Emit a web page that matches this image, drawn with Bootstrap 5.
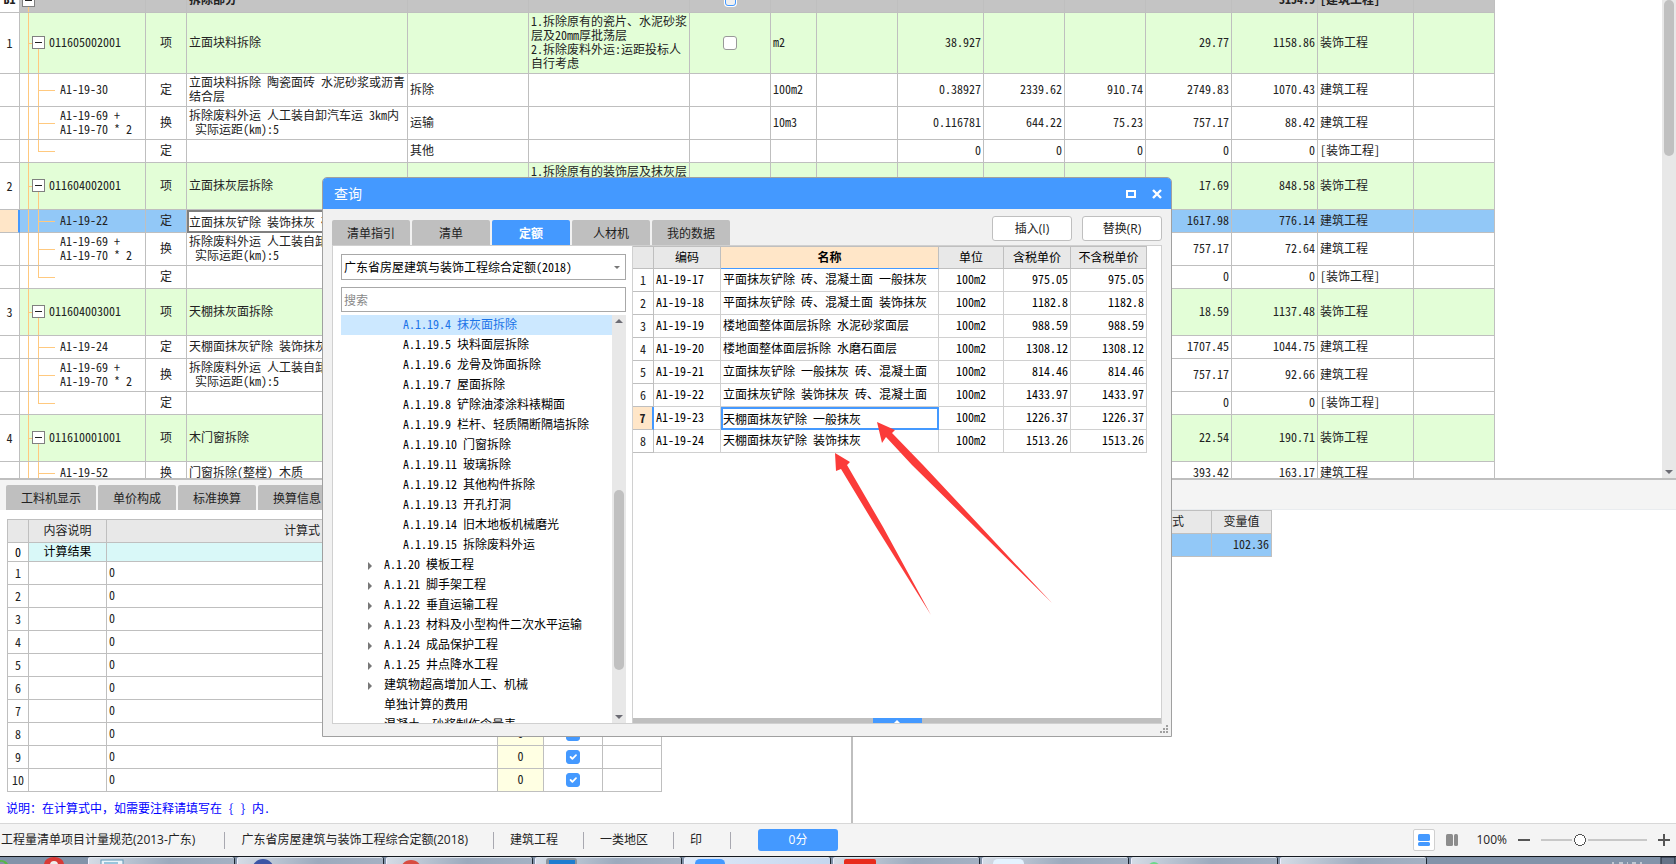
<!DOCTYPE html>
<html lang="zh-CN">
<head>
<meta charset="utf-8">
<meta name="viewport" content="width=device-width, initial-scale=1">
<title>工程计价 - 查询</title>
<link rel="stylesheet" href="https://cdn.jsdelivr.net/npm/bootstrap@5.3.0/dist/css/bootstrap.min.css">
<style>
:root{--line:#bfbfbf;--blue:#4499ff;--panel:#f4f4f4;--head:#e8e8e8;--sel:#92c8f7;--green:#e3fed7;--tree:#ffc97f;--peach:#ffe6c8}
body{font-family:"Noto Sans Mono CJK SC","Noto Sans CJK SC",sans-serif;font-size:12px;line-height:14px;color:#222;background:#fff}
.ui{font-family:"Open Sans","Noto Sans CJK SC",sans-serif}
.app{height:100vh;min-width:1200px}
.upper{flex:479 1 0;min-height:0}
.lower{flex:343 1 0;min-height:0}
.sheet{overflow:hidden;flex:1 1 0}
.grid{table-layout:fixed;border-collapse:separate;border-spacing:0}
.grid th,.grid td{border:0 solid var(--line);border-right-width:1px;border-bottom-width:1px;padding:0 2px 2px;height:23px;font-weight:400;overflow:hidden;white-space:nowrap;vertical-align:middle}
.grid th{background:var(--head);text-align:center}
.grid .no{text-align:center;padding:0}
.c{text-align:center}
.r{text-align:right}
.main-sheet{margin-top:-10px;width:1495px}
.main-sheet tr.h61 td{height:61px}
.main-sheet tr.h33 td{height:33px}
.main-sheet tr.h47 td{height:47px}
.main-sheet td{white-space:pre-line;line-height:14px}
.main-sheet td.pre{white-space:pre}
.part td{background-color:#c4c4c4;font-weight:700}
.part td.no,.item td.no{background:#fff}
.grid .part td{padding-bottom:4px}
.item td{background-color:var(--green)}
.pick td{background-color:var(--sel)}
.pick td.no{background:var(--peach);border-right:2px solid var(--blue)}
.grid .pick td.name{background:#fff;border:2px solid #808080;padding:0}
.main-sheet .code{background-repeat:no-repeat;background-origin:border-box;position:relative}
.part .code{background-image:linear-gradient(var(--tree),var(--tree));background-size:1px 50%;background-position:8px 100%}
.item .code{padding-left:29px;background-image:linear-gradient(var(--tree),var(--tree)),linear-gradient(var(--tree),var(--tree)),linear-gradient(var(--tree),var(--tree));background-size:1px 100%,4px 1px,1px 50%;background-position:8px 0,8px 50%,18px 100%}
.leaf .code{padding-left:40px;background-image:linear-gradient(var(--tree),var(--tree)),linear-gradient(var(--tree),var(--tree)),linear-gradient(var(--tree),var(--tree));background-size:1px 100%,17px 1px,1px 100%;background-position:8px 0,18px 50%,18px 0}
.leaf.end .code{background-size:1px 100%,17px 1px,1px 50%}
.toggle{position:absolute;left:12px;top:50%;margin-top:-7px;width:13px;height:13px;padding:0;border:1px solid #808080;background:#fff}
.toggle::after{content:"";display:block;height:1px;margin:0 2px;background:#222}
.part .toggle{left:2px}
.form-check-input{width:14px;height:14px;margin:0;border:1px solid #999;border-radius:2px;float:none;display:inline-block;vertical-align:middle}
.form-check-input:checked{background-color:var(--blue);border-color:var(--blue)}
.part .form-check-input{border-color:var(--blue);box-shadow:0 0 0 1px #fff;background:#f0f0f0;width:11px;height:12px}
.vbar{width:14px;background:#e8e8e8}
.thumb{width:10px;margin:0 auto;background:#c0c0c0;border-radius:5px}
.tri-d,.tri-u{width:0;border:4px solid transparent;margin:0 auto}
.tri-d{border-top-color:#6c6c74;border-bottom:0}
.tri-u{border-bottom-color:#6c6c74;border-top:0}
.split-h{height:2px;background:var(--line)}
.strip{height:30px;background:var(--panel)}
.strip.tabs{padding-left:6px}
.tabs{gap:2px}
.tab{width:78px;height:25px;padding:0;border:0;border-radius:2px 2px 0 0;background:#bfbfbf;font-size:12px;line-height:24px;color:#222}
.tab.wide{width:90px}
.tab.on{background:var(--blue);color:#fff;font-weight:700}
.calc{margin:9px 0 0 7px;width:655px;border-left:1px solid var(--line);border-top:1px solid var(--line)}
.calc .sum td{height:19px;background:#d9f8f8;color:#000}
.calc .sum td.no{background:#fff}
.calc .cream{background:#ffffe3}
.left-pane{flex:851 1 0;min-width:0;border-right:2px solid var(--line)}
.right-pane{flex:823 1 0;min-width:0}
.note{color:#00f;margin:9px 6px 0}
.vars{width:419px;border-top:1px solid var(--line)}
.status{height:33px;background:var(--panel);border-top:1px solid #d8d8d8;font-size:12px}
.sep{width:1px;height:17px;background:#a8a8b0}
.st{padding:0 25px 0 16px}
.st:first-child{padding:0 29px 0 1px}
.st-seal{padding-right:28px}
.score{width:80px;height:22px;margin-left:27px;padding:0;background:var(--blue);color:#fff;border-radius:3px;font-size:12px;line-height:22px;border:0}
.st-right{gap:11px;padding-right:6px}
.pct{margin-left:7px}
.view-on{width:22px;height:22px;border:1px solid #d0d0d0;border-radius:2px;background:#fff;padding:0;line-height:0}
.icon-btn{border:0;background:none;padding:0;line-height:0}
.zoom{appearance:none;width:106px;height:14px;background:linear-gradient(#c8c8c8,#c8c8c8) 0 50%/100% 2px no-repeat;margin:0}
.zoom::-webkit-slider-thumb{appearance:none;width:16px;height:14px;border:0;background:radial-gradient(circle,#fff 0 5px,#555 5px 6px,var(--panel) 6px)}
.taskbar{height:8px;background:#8293a9;border-top:1px solid #15191f;overflow:hidden}
.start{width:88px}
.tasks{gap:3px}
.task{width:146px;height:12px;padding:0 0 0 10px;border:0;border-left:1px solid #eef;border-top:1px solid #dfe6ee;border-radius:2px 2px 0 0;background:linear-gradient(100deg,#d5dce6,#9caabd 55%,#a4b1c3);box-shadow:1px 0 0 #1c2530;text-align:left;line-height:0}
.task svg{display:block;margin-bottom:6px}
.task.cur{background:linear-gradient(100deg,#dfe9f8,#c4d6ee)}
.dialog{position:absolute;left:322px;top:177px;width:850px;height:560px;background:#f1f1f1;border:1px solid #a0a0a0;border-radius:5px 5px 0 0;overflow:hidden}
.titlebar{height:31px;background:var(--blue);color:#fff;font-size:14px;line-height:31px;padding:0 9px 0 11px}
.dlg-top{padding:0 9px;height:36px}
.dlg-btns{gap:10px;margin-bottom:4px}
.dlg-body{margin:0 9px 12px;border:1px solid #d0d0d0;background:#fff;min-height:0}
.dlg-btn{width:80px;height:25px;padding:0;border:1px solid #bfbfbf;border-radius:3px;background:#fff;font-size:12px;line-height:23px;color:#222}
.query{width:299px}
.form-select,.form-control{height:26px;margin:0 6px 0 8px;width:285px;border:1px solid #a8a8a8;border-radius:0;padding:0 2px;font-size:12px;line-height:24px;color:#000;background-color:#fff}
.form-select{background-image:url("data:image/svg+xml,%3Csvg xmlns='http://www.w3.org/2000/svg' width='6' height='3'%3E%3Cpath d='M0 0h6L3 3z' fill='%23777'/%3E%3C/svg%3E");background-size:6px 3px;background-position:right 5px top 11px}
.form-control::placeholder{color:#888}
.search{margin-top:7px}
.tree{margin:3px 6px 0 8px;min-height:0}
.tree-thumb{height:180px;margin-top:167px}
.nodes{overflow:hidden;color:#000;line-height:18px}
.nodes li{height:20px;padding-left:43px;white-space:pre;position:relative}
.nodes li.deep{padding-left:62px}
.nodes li.sel{background:#cce8ff;color:#1a73e8}
.nodes li.has::before{content:"";position:absolute;left:27px;top:7px;border:4px solid transparent;border-left-color:#777;border-right:0}
.found{border-left:1px solid #d0d0d0}
.result{color:#000;width:514px}
.result th{border-top:1px solid var(--line)}
.result td{border-color:#d0d0d0}
.result .no{border-color:var(--line);color:#222}
.result th.hot{background:var(--peach);font-weight:700;border-bottom-color:var(--blue)}
.result .cur .no{background:var(--peach);font-weight:700;border-right:2px solid var(--blue)}
.result .cur .name{border:2px solid var(--blue);padding:0}
.drawer{height:5px;background:#bfbfbf}
.drawer button{width:49px;height:5px;border:0;padding:0;background:var(--blue);line-height:0;display:block}
.drawer svg{display:block;margin:1px auto 0}
.grip{position:absolute;right:3px;bottom:3px}
.arrows{position:absolute;left:830px;top:418px;pointer-events:none}
</style>
</head>
<body>
<div class="app d-flex flex-column position-relative overflow-hidden">

  <div class="upper d-flex overflow-hidden">
    <div class="sheet">
      <table class="grid main-sheet">
        <colgroup id="mainCols"></colgroup>
        <tbody id="mainRows"></tbody>
      </table>
    </div>
    <div class="vbar d-flex flex-column justify-content-between">
      <div class="thumb" style="height:156px"></div>
      <div class="tri-d mb-1"></div>
    </div>
  </div>
  <div class="split-h flex-shrink-0"></div>

  <div class="lower d-flex overflow-hidden">
    <section class="left-pane overflow-hidden">
      <div class="strip d-flex align-items-end tabs">
        <button class="tab wide">工料机显示</button><button class="tab">单价构成</button><button class="tab">标准换算</button><button class="tab">换算信息</button>
      </div>
      <table class="grid calc">
        <colgroup><col style="width:21px"><col style="width:78px"><col style="width:391px"><col style="width:46px"><col style="width:59px"><col style="width:59px"></colgroup>
        <thead><tr><th></th><th>内容说明</th><th>计算式</th><th></th><th></th><th></th></tr></thead>
        <tbody id="calcRows"></tbody>
      </table>
      <p class="note">说明：在计算式中，如需要注释请填写在 { } 内.</p>
    </section>
    <section class="right-pane overflow-hidden">
      <div class="strip border-bottom border-secondary-subtle"></div>
      <table class="grid vars">
        <colgroup><col style="width:21px"><col style="width:247px"><col style="width:91px"><col style="width:60px"></colgroup>
        <thead><tr><th></th><th></th><th>计算式</th><th>变量值</th></tr></thead>
        <tbody><tr class="pick"><td></td><td></td><td></td><td class="r">102.36</td></tr></tbody>
      </table>
    </section>
  </div>

  <footer class="status ui d-flex align-items-center flex-shrink-0">
    <span class="st">工程量清单项目计量规范(2013-广东)</span><i class="sep"></i>
    <span class="st">广东省房屋建筑与装饰工程综合定额(2018)</span><i class="sep"></i>
    <span class="st">建筑工程</span><i class="sep"></i>
    <span class="st">一类地区</span><i class="sep"></i>
    <span class="st st-seal">印</span><i class="sep"></i>
    <button class="score btn">0分</button>
    <div class="d-flex align-items-center ms-auto st-right">
      <button class="view-on" aria-label="上下布局"><svg width="12" height="12"><rect width="12" height="7" rx="1.5" fill="#4499ff"/><rect y="8" width="12" height="4" rx="1.5" fill="#4499ff"/></svg></button>
      <button class="icon-btn" aria-label="左右布局"><svg width="12" height="12"><rect width="7" height="12" rx="1.5" fill="#8c8c8c"/><rect x="8" width="4" height="12" rx="1.5" fill="#8c8c8c"/></svg></button>
      <span class="pct">100%</span>
      <button class="icon-btn" aria-label="缩小"><svg width="12" height="12"><path d="M0 6h12" stroke="#555" stroke-width="2"/></svg></button>
      <input class="zoom" type="range" min="0" max="100" value="34" aria-label="缩放">
      <button class="icon-btn" aria-label="放大"><svg width="12" height="12"><path d="M0 6h12M6 0v12" stroke="#555" stroke-width="2"/></svg></button>
    </div>
  </footer>

  <nav class="taskbar d-flex flex-shrink-0" aria-label="任务栏">
    <div class="start"><svg class="d-block" width="88" height="7"><path d="M0 3q6 0 8 4H5Q3 4 0 5z" fill="#57b847"/><path d="M44 7a10 7 0 0 1 20 0z" fill="#d93a36"/><circle cx="54" cy="8" r="4" fill="#eee"/></svg></div>
    <div class="d-flex tasks">
      <button class="task" aria-label="任务一"><svg width="30" height="6"><rect x="2" y="2" width="22" height="5" fill="#eaf4fa" stroke="#5f98b5"/><path d="M5 5h14" stroke="#4596bd"/></svg></button>
      <button class="task" aria-label="任务二"><svg width="30" height="6"><circle cx="15" cy="12" r="11" fill="#3c55a5"/></svg></button>
      <button class="task" aria-label="任务三"><svg width="30" height="6"><circle cx="14" cy="13" r="11" fill="#d84c40"/></svg></button>
      <button class="task" aria-label="任务四"><svg width="34" height="6"><rect width="31" height="8" rx="3" fill="#8d949c"/><rect x="3" y="2" width="26" height="6" fill="#1e7dd0"/></svg></button>
      <button class="task cur" aria-label="任务五"><svg width="34" height="6"><rect y="1" width="30" height="9" rx="5" fill="#4499ff"/></svg></button>
      <button class="task" aria-label="任务六"><svg width="34" height="6"><rect y="1" width="32" height="9" rx="2" fill="#e82c1c"/></svg></button>
      <button class="task" aria-label="任务七"><svg width="34" height="6"><rect y="1" width="31" height="9" rx="5" fill="#e4f3ff"/></svg></button>
      <button class="task" aria-label="任务八"><svg width="34" height="6"><circle cx="12" cy="10" r="6" fill="#6ad98a"/></svg></button>
      <button class="task" aria-label="任务九"></button>
    </div>
    <div class="ms-auto"><svg class="d-block" width="68" height="7"><path d="M4 6h2M11 6h4M19 6h1M24 6h4M32 6h2" stroke="#fff" stroke-width="1"/><rect x="53" width="14" height="8" fill="#667388" stroke="#1c2530"/></svg></div>
  </nav>

  <div class="dialog d-flex flex-column" role="dialog" aria-label="查询">
    <div class="titlebar ui d-flex align-items-center flex-shrink-0">
      <span class="me-auto">查询</span>
      <button class="icon-btn me-3" aria-label="最大化"><svg width="10" height="8"><rect x="1" y="1" width="8" height="6" fill="none" stroke="#fff" stroke-width="2"/></svg></button>
      <button class="icon-btn" aria-label="关闭"><svg width="10" height="10"><path d="M1 1l8 8M9 1l-8 8" stroke="#fff" stroke-width="2.4"/></svg></button>
    </div>
    <div class="dlg-top d-flex align-items-end flex-shrink-0">
      <div class="d-flex tabs me-auto">
        <button class="tab">清单指引</button><button class="tab">清单</button><button class="tab on">定额</button><button class="tab">人材机</button><button class="tab">我的数据</button>
      </div>
      <div class="dlg-btns d-flex"><button class="dlg-btn ui">插入(I)</button><button class="dlg-btn ui">替换(R)</button></div>
    </div>
    <div class="dlg-body d-flex flex-grow-1">
      <div class="query d-flex flex-column flex-shrink-0">
        <select class="form-select mt-2" aria-label="定额库"><option>广东省房屋建筑与装饰工程综合定额(2018)</option></select>
        <input class="form-control search" type="text" placeholder="搜索" aria-label="搜索">
        <div class="tree d-flex flex-grow-1">
          <ul class="nodes list-unstyled mb-0 flex-grow-1" id="nodes"></ul>
          <div class="vbar d-flex flex-column flex-shrink-0">
            <div class="tri-u mt-1"></div>
            <div class="thumb tree-thumb"></div>
            <div class="tri-d mt-auto mb-1"></div>
          </div>
        </div>
      </div>
      <div class="found flex-grow-1 d-flex flex-column">
        <table class="grid result">
          <colgroup><col style="width:21px"><col style="width:67px"><col style="width:218px"><col style="width:65px"><col style="width:67px"><col style="width:76px"></colgroup>
          <thead><tr><th></th><th>编码</th><th class="hot">名称</th><th>单位</th><th>含税单价</th><th>不含税单价</th></tr></thead>
          <tbody id="found"></tbody>
        </table>
        <div class="drawer mt-auto d-flex justify-content-center"><button aria-label="展开"><svg width="6" height="3"><path d="M0 3l3-3 3 3z" fill="#fff"/></svg></button></div>
      </div>
    </div>
    <svg class="grip" width="8" height="8" fill="#a0a0a0"><path d="M6 0h2v2H6zM3 3h2v2H3zM6 3h2v2H6zM0 6h2v2H0zM3 6h2v2H3zM6 6h2v2H6z"/></svg>
  </div>

  <svg class="arrows" width="230" height="204" fill="#fb3b39">
    <path d="M47 4L65 12 62 15 93 47 222 185 82 47 56 19 52 25z"/>
    <path d="M5 35L20 44 17 47 53 109 101 197 46 109 11 51 6 53z"/>
  </svg>
</div>
<script src="https://cdn.jsdelivr.net/npm/bootstrap@5.3.0/dist/js/bootstrap.bundle.min.js"></script>
<script>
const el = id => document.getElementById(id);
el('mainCols').innerHTML = [20,126,41,221,121,161,81,46,81,86,81,81,86,86,96,81].map(w => `<col style="width:${w}px">`).join('');

// row: [classes, no, code, kind, name, spec, feature, checkbox, unit, blank, qty, p1, p2, price, total, profession]
const box = '<input type="checkbox" class="form-check-input" aria-label="选择">';
const transport = '拆除废料外运 人工装自卸汽车运 3km内\n 实际运距(km):5';
const swap = 'A1-19-69 +\nA1-19-70 * 2';
const rows = [
 ['part','B1','','','拆除部分','','',box,'','','','','','','3154.9','[建筑工程]'],
 ['item h61','1','011605002001','项','立面块料拆除','','1.拆除原有的瓷片、水泥砂浆\n层及20mm厚批荡层\n2.拆除废料外运:运距投标人\n自行考虑',box,'m2','','38.927','','','29.77','1158.86','装饰工程'],
 ['leaf h33','','A1-19-30','定','立面块料拆除 陶瓷面砖 水泥砂浆或沥青\n结合层','拆除','','','100m2','','0.38927','2339.62','910.74','2749.83','1070.43','建筑工程'],
 ['leaf h33','',swap,'换',transport,'运输','','','10m3','','0.116781','644.22','75.23','757.17','88.42','建筑工程'],
 ['leaf end','','','定','','其他','','','','','0','0','0','0','0','[装饰工程]'],
 ['item h47','2','011604002001','项','立面抹灰层拆除','','1.拆除原有的装饰层及抹灰层\n\n\n','','','','','','','17.69','848.58','装饰工程'],
 ['leaf pick','','A1-19-22','定','立面抹灰铲除 装饰抹灰 砖','','','','','','','','','1617.98','776.14','建筑工程'],
 ['leaf h33','',swap,'换',transport,'','','','','','','','','757.17','72.64','建筑工程'],
 ['leaf end','','','定','','','','','','','','','','0','0','[装饰工程]'],
 ['item h47','3','011604003001','项','天棚抹灰面拆除','','','','','','','','','18.59','1137.48','装饰工程'],
 ['leaf','','A1-19-24','定','天棚面抹灰铲除 装饰抹灰','','','','','','','','','1707.45','1044.75','建筑工程'],
 ['leaf h33','',swap,'换',transport,'','','','','','','','','757.17','92.66','建筑工程'],
 ['leaf end','','','定','','','','','','','','','','0','0','[装饰工程]'],
 ['item h47','4','011610001001','项','木门窗拆除','','','','','','','','','22.54','190.71','装饰工程'],
 ['leaf','','A1-19-52','换','门窗拆除(整樘) 木质','','','','','','','','','393.42','163.17','建筑工程']
];
const cls = ['no','code','c','name pre','','pre','c','','','r','r','r','r','r','',''];
el('mainRows').innerHTML = rows.map(([k, ...cells]) => `<tr class="${k}">` +
  [...cells, ''].map((v, i) => {
    const t = i === 1 && /part|item/.test(k) ? '<button class="toggle" aria-label="折叠"></button>' : '';
    return `<td class="${cls[i]}">${t}${v}</td>`;
  }).join('') + '</tr>').join('');

el('calcRows').innerHTML = '<tr class="sum"><td class="no">0</td><td class="c">计算结果</td><td></td><td></td><td></td><td></td></tr>' +
  Array.from({length: 10}, (_, i) => `<tr><td class="no">${i + 1}</td><td></td><td>0</td><td class="cream c">0</td><td class="c"><input type="checkbox" checked class="form-check-input" aria-label="累加"></td><td></td></tr>`).join('');

el('nodes').innerHTML = [
 ['deep sel','A.1.19.4 抹灰面拆除'],['deep','A.1.19.5 块料面层拆除'],['deep','A.1.19.6 龙骨及饰面拆除'],['deep','A.1.19.7 屋面拆除'],
 ['deep','A.1.19.8 铲除油漆涂料裱糊面'],['deep','A.1.19.9 栏杆、轻质隔断隔墙拆除'],['deep','A.1.19.10 门窗拆除'],['deep','A.1.19.11 玻璃拆除'],
 ['deep','A.1.19.12 其他构件拆除'],['deep','A.1.19.13 开孔打洞'],['deep','A.1.19.14 旧木地板机械磨光'],['deep','A.1.19.15 拆除废料外运'],
 ['has','A.1.20 模板工程'],['has','A.1.21 脚手架工程'],['has','A.1.22 垂直运输工程'],['has','A.1.23 材料及小型构件二次水平运输'],
 ['has','A.1.24 成品保护工程'],['has','A.1.25 井点降水工程'],['has','建筑物超高增加人工、机械'],['','单独计算的费用'],['','混凝土、砂浆制作含量表']
].map(([c, t]) => `<li class="${c}">${t}</li>`).join('');

el('found').innerHTML = [
 ['A1-19-17','平面抹灰铲除 砖、混凝土面 一般抹灰','975.05'],
 ['A1-19-18','平面抹灰铲除 砖、混凝土面 装饰抹灰','1182.8'],
 ['A1-19-19','楼地面整体面层拆除 水泥砂浆面层','988.59'],
 ['A1-19-20','楼地面整体面层拆除 水磨石面层','1308.12'],
 ['A1-19-21','立面抹灰铲除 一般抹灰 砖、混凝土面','814.46'],
 ['A1-19-22','立面抹灰铲除 装饰抹灰 砖、混凝土面','1433.97'],
 ['A1-19-23','天棚面抹灰铲除 一般抹灰','1226.37'],
 ['A1-19-24','天棚面抹灰铲除 装饰抹灰','1513.26']
].map(([a, b, p], i) => `<tr class="${i === 6 ? 'cur' : ''}"><td class="no">${i + 1}</td><td>${a}</td><td class="name">${b}</td><td class="c">100m2</td><td class="r">${p}</td><td class="r">${p}</td></tr>`).join('');
</script>
</body>
</html>
